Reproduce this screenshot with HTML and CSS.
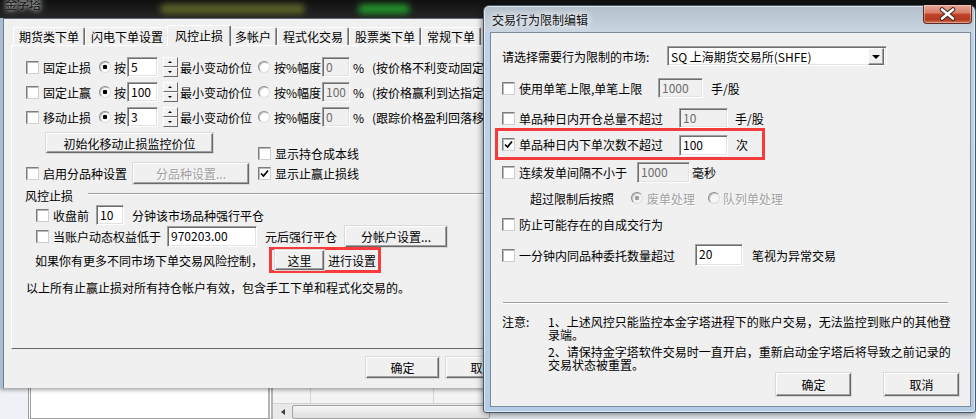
FILE: index.html
```html
<!DOCTYPE html>
<html lang="zh-CN">
<head>
  <meta charset="UTF-8">
  <title>交易行为限制编辑</title>
  <link rel="stylesheet" href="styles.css">
</head>
<body>
  <div class="desktop">
    <div class="backdrop">
      <div class="glow glow-olive"></div>
      <div class="glow glow-green"></div>
    </div>

    <div class="under">
      <div class="under-side"></div>
      <div class="under-list"></div>
      <div class="under-grid">
        <div class="hscroll">
          <span class="hscroll-arrow"></span>
          <span class="hscroll-thumb"></span>
        </div>
      </div>
    </div>

    <!-- 背后的主窗口 -->
    <div class="main-win">
      <div class="main-title"><span>金字塔</span></div>
      <div class="main-body">
        <div class="main-client">
          <div class="tabs">
            <span class="tab">期货类下单</span>
            <span class="tab">闪电下单设置</span>
            <span class="tab tab-on">风控止损</span>
            <span class="tab">多帐户</span>
            <span class="tab">程式化交易</span>
            <span class="tab">股票类下单</span>
            <span class="tab">常规下单</span>
          </div>
          <div class="panel">
            <div class="row stop-row first-row">
              <label class="chk stop-name"><span class="cb"></span>固定止损</label>
              <span class="rd on"></span>
              <span class="by">按</span>
              <span class="tb tick">5</span>
              <span class="spin"><i class="up"></i><i class="down"></i></span>
              <span class="unit-tick">最小变动价位</span>
              <span class="rd rd-pct"></span>
              <span class="pct-name">按%幅度</span>
              <span class="tb off pct">0</span>
              <span class="pct-sign">%</span>
              <span class="hint">(按价格不利变动固定</span>
            </div>
            <div class="row stop-row">
              <label class="chk stop-name"><span class="cb"></span>固定止赢</label>
              <span class="rd on"></span>
              <span class="by">按</span>
              <span class="tb tick">100</span>
              <span class="spin"><i class="up"></i><i class="down"></i></span>
              <span class="unit-tick">最小变动价位</span>
              <span class="rd rd-pct"></span>
              <span class="pct-name">按%幅度</span>
              <span class="tb off pct">100</span>
              <span class="pct-sign">%</span>
              <span class="hint">(按价格赢利到达指定</span>
            </div>
            <div class="row stop-row">
              <label class="chk stop-name"><span class="cb"></span>移动止损</label>
              <span class="rd on"></span>
              <span class="by">按</span>
              <span class="tb tick">3</span>
              <span class="spin"><i class="up"></i><i class="down"></i></span>
              <span class="unit-tick">最小变动价位</span>
              <span class="rd rd-pct"></span>
              <span class="pct-name">按%幅度</span>
              <span class="tb off pct">0</span>
              <span class="pct-sign">%</span>
              <span class="hint">(跟踪价格盈利回落移</span>
            </div>
            <div class="row init-row">
              <span class="btn init-btn">初始化移动止损监控价位</span>
              <label class="chk cost-line"><span class="cb"></span>显示持仓成本线</label>
            </div>
            <div class="row cat-row">
              <label class="chk cat-name"><span class="cb"></span>启用分品种设置</label>
              <span class="btn off cat-btn">分品种设置...</span>
              <label class="chk stop-line"><span class="cb"><svg viewBox="0 0 11 11"><polyline points="2,5.5 4.5,8 9,2.5"/></svg></span>显示止赢止损线</label>
            </div>
            <div class="group">风控止损</div>
            <div class="row close-row">
              <label class="chk close-name"><span class="cb"></span>收盘前</label>
              <span class="tb mins">10</span>
              <span class="after-input">分钟该市场品种强行平仓</span>
            </div>
            <div class="row equity-row">
              <label class="chk equity-name"><span class="cb"></span>当账户动态权益低于</label>
              <span class="tb equity">970203.00</span>
              <span class="after-input equity-unit">元后强行平仓</span>
              <span class="btn acct-btn">分帐户设置...</span>
            </div>
            <div class="row more-row">
              <span class="more-text">如果你有更多不同市场下单交易风险控制，</span>
              <span class="mark main-mark">
                <span class="btn here-btn">这里</span>
                <span class="here-text">进行设置</span>
              </span>
            </div>
            <div class="row note-row">以上所有止赢止损对所有持仓帐户有效，包含手工下单和程式化交易的。</div>
          </div>
          <div class="main-actions">
            <span class="btn act">确定</span>
            <span class="btn act">取消</span>
          </div>
        </div>
      </div>
    </div>

    <!-- 交易行为限制编辑 对话框 -->
    <div class="dialog">
      <div class="dlg-title">
        <span class="dlg-title-text">交易行为限制编辑</span>
        <span class="close-btn">
          <svg width="47" height="18" viewBox="0 0 47 18">
            <path d="M18 4.5 L29 13.5 M29 4.5 L18 13.5" stroke="#3b2520" stroke-width="4.6" stroke-linecap="round"/>
            <path d="M18 4.5 L29 13.5 M29 4.5 L18 13.5" stroke="#fff" stroke-width="2.6" stroke-linecap="round"/>
          </svg>
        </span>
      </div>
      <div class="dlg-client">
        <div class="row market-row">
          <span class="market-label">请选择需要行为限制的市场:</span>
          <span class="combo">
            <span class="combo-text">SQ 上海期货交易所(SHFE)</span>
            <span class="combo-drop"></span>
          </span>
        </div>
        <div class="row d-row1">
          <label class="chk lim-single"><span class="cb"></span>使用单笔上限,单笔上限</label>
          <span class="tb off lim-single-tb">1000</span>
          <span class="unit lim-single-unit">手/股</span>
        </div>
        <div class="row d-row2">
          <label class="chk lim-open"><span class="cb"></span>单品种日内开仓总量不超过</label>
          <span class="tb off lim-open-tb">10</span>
          <span class="unit lim-open-unit">手/股</span>
        </div>
        <div class="mark dlg-mark">
          <label class="chk lim-open"><span class="cb"><svg viewBox="0 0 11 11"><polyline points="2,5.5 4.5,8 9,2.5"/></svg></span>单品种日内下单次数不超过</label>
          <span class="tb lim-count-tb">100</span>
          <span class="unit lim-count-unit">次</span>
        </div>
        <div class="row d-row4">
          <label class="chk lim-gap"><span class="cb"></span>连续发单间隔不小于</label>
          <span class="tb off lim-gap-tb">1000</span>
          <span class="unit lim-gap-unit">毫秒</span>
        </div>
        <div class="row d-row5">
          <span class="over-label">超过限制后按照</span>
          <span class="rd on off"></span>
          <span class="dim opt-void">废单处理</span>
          <span class="rd off opt-queue-rd"></span>
          <span class="dim opt-queue">队列单处理</span>
        </div>
        <div class="row d-row6">
          <label class="chk"><span class="cb"></span>防止可能存在的自成交行为</label>
        </div>
        <div class="row d-row7">
          <label class="chk lim-burst"><span class="cb"></span>一分钟内同品种委托数量超过</label>
          <span class="tb lim-burst-tb">20</span>
          <span class="unit lim-burst-unit">笔视为异常交易</span>
        </div>
        <div class="sep"></div>
        <div class="notes">
          <div class="notes-label">注意:</div>
          <div class="notes-body">
            <p>1、上述风控只能监控本金字塔进程下的账户交易，无法监控到账户的其他登<br>录端。</p>
            <p>2、请保持金字塔软件交易时一直开启，重新启动金字塔后将导致之前记录的<br>交易状态被重置。</p>
          </div>
        </div>
        <div class="dlg-actions">
          <span class="btn dlg-btn">确定</span>
          <span class="btn dlg-btn">取消</span>
        </div>
      </div>
    </div>
  </div>
</body>
</html>
```

FILE: styles.css
```css
* {
  box-sizing: border-box;
}
body {
  margin: 0;
  font-family: "Noto Sans CJK SC", "Liberation Sans", sans-serif;
  font-size: 12px;
  color: #000;
}
.desktop {
  position: relative;
  width: 976px;
  height: 419px;
  overflow: hidden;
  background: #dfe5ec;
}

/* 顶部深色背景 */
.backdrop {
  position: absolute;
  left: 0;
  top: 0;
  width: 976px;
  height: 40px;
  background: linear-gradient(#101010, #262626 18px, #3a3a3a 40px);
}
.glow {
  position: absolute;
  top: 4px;
  height: 10px;
  border-radius: 5px;
  filter: blur(3px);
}
.glow-olive {
  left: 160px;
  width: 145px;
  background: #5c6126;
}
.glow-green {
  left: 358px;
  width: 52px;
  background: #22902b;
}

/* 主窗口下方露出的列表 */
.under {
  position: absolute;
  left: 0;
  top: 388px;
  width: 490px;
  height: 31px;
  display: flex;
  background: #f4f4f4;
}
.under-side {
  width: 28px;
  background: #eef1f5;
}
.under-list {
  width: 245px;
  background: #fff;
  border-left: 3px double #9c9c9c;
  border-right: 5px double #b5b5b5;
  border-bottom: 1px solid #a0a0a0;
}
.under-grid {
  flex: 1;
  display: flex;
  flex-direction: column;
  justify-content: flex-end;
  background: linear-gradient(90deg, transparent 37px, #d8d8d8 37px, #d8d8d8 38px, transparent 38px, transparent 160px, #d8d8d8 160px, #d8d8d8 161px, transparent 161px);
}
.hscroll {
  height: 16px;
  display: flex;
  padding: 1px 0 0 2px;
  background: #e9e9e9;
  border-top: 1px solid #d4d4d4;
}
.hscroll-arrow {
  width: 17px;
  position: relative;
}
.hscroll-arrow::after {
  content: "";
  position: absolute;
  left: 6px;
  top: 4px;
  border: 3px solid transparent;
  border-right: 4px solid #3c3c3c;
  border-left: 0;
}
.hscroll-thumb {
  flex: 1;
  border: 1px solid #a3a3a3;
  border-radius: 2px;
  background: linear-gradient(#f7f7f7, #dedede);
}

/* 主窗口 */
.main-win {
  position: absolute;
  left: 0;
  top: 0;
  width: 500px;
}
.main-title {
  height: 18px;
  padding-left: 5px;
  line-height: 12px;
  overflow: hidden;
}
.main-title span {
  display: block;
  margin-top: -2px;
  color: #111;
  text-shadow: 0 0 4px #fff, 0 0 8px rgba(255, 255, 255, 0.7);
}
.main-body {
  height: 370px;
  border-left: 3px solid #a9bdd2;
  box-shadow: 0 2px 4px rgba(0, 0, 0, 0.35);
}
.main-client {
  height: 100%;
  background: #f0f0f0;
  border-top: 1px solid #5c6875;
  border-left: 1px solid #6e7d8c;
  padding-top: 6px;
}
.tabs {
  display: flex;
  align-items: flex-end;
  height: 20px;
  margin-left: 9px;
}
.tab {
  position: relative;
  height: 18px;
  padding: 0 5px;
  line-height: 17px;
  white-space: nowrap;
  border: 1px solid #fff;
  border-right-color: #696969;
  border-bottom: 0;
  border-radius: 2px 2px 0 0;
  box-shadow: inset -1px 0 0 #a0a0a0;
}
.tab-on {
  z-index: 2;
  height: 21px;
  margin: 0 -2px -1px;
  padding: 0 7px;
  line-height: 19px;
  background: #f0f0f0;
}
.panel {
  width: 480px;
  height: 304px;
  margin-left: 7px;
  padding-left: 14px;
  border: 1px solid #fff;
  border-right-color: #696969;
  border-bottom-color: #696969;
  overflow: hidden;
  white-space: nowrap;
}
.row {
  display: flex;
  align-items: center;
  height: 20px;
  white-space: nowrap;
}

/* 控件 */
.chk {
  display: flex;
  align-items: center;
  gap: 4px;
  flex: none;
}
.cb {
  width: 13px;
  height: 13px;
  flex: none;
  background: #fff;
  border: 1px solid #7d7d7d;
  border-right-color: #cfcfcf;
  border-bottom-color: #cfcfcf;
  box-shadow: inset 1px 1px 0 #b9b9b9;
}
.cb svg {
  display: block;
  width: 11px;
  height: 11px;
  fill: none;
  stroke: #000;
  stroke-width: 1.7;
}
.rd {
  width: 12px;
  height: 12px;
  flex: none;
  border-radius: 50%;
  border: 1px solid #8a8a8a;
  border-right-color: #dcdcdc;
  border-bottom-color: #dcdcdc;
  background: #fff;
  box-shadow: inset 1px 1px 0 #c4c4c4;
}
.rd.on {
  background: radial-gradient(circle, #000 0, #000 2px, #fff 2.6px);
}
.rd.off {
  background-color: #f4f4f4;
}
.rd.on.off {
  background: radial-gradient(circle, #a0a0a0 0, #a0a0a0 2px, #f4f4f4 2.6px);
}
.tb {
  height: 20px;
  flex: none;
  padding-left: 3px;
  line-height: 18px;
  background: #fff;
  border: 1px solid #a0a0a0;
  border-right-color: #fff;
  border-bottom-color: #fff;
  box-shadow: inset 1px 1px 0 #6d6d6d, inset -1px -1px 0 #e3e3e3;
}
.tb.off {
  background: #f0f0f0;
  color: #6d6d6d;
}
.btn {
  display: flex;
  align-items: center;
  justify-content: center;
  flex: none;
  background: #f0f0f0;
  border: 1px solid #fff;
  border-right-color: #696969;
  border-bottom-color: #696969;
  box-shadow: inset -1px -1px 0 #a0a0a0, 0 0 0 1px #d9d9d9;
}
.btn.off {
  color: #a0a0a0;
  text-shadow: 1px 1px 0 #fff;
}
.spin {
  display: flex;
  flex-direction: column;
  width: 15px;
  height: 20px;
  margin-left: 5px;
  flex: none;
}
.spin i {
  position: relative;
  flex: 1;
  background: #f0f0f0;
  border: 1px solid #fff;
  border-right-color: #696969;
  border-bottom-color: #696969;
}
.spin i::after {
  content: "";
  position: absolute;
  left: 4px;
  top: 3px;
  border: 2px solid transparent;
}
.spin .up::after {
  top: 1px;
  border-bottom: 2px solid #000;
}
.spin .down::after {
  top: 3px;
  border-top: 2px solid #000;
}
.mark {
  display: flex;
  align-items: center;
  border: 3px solid #f53b3b;
}

/* 风控止损页 */
.first-row {
  margin-top: 11px;
}
.stop-row + .stop-row {
  margin-top: 5px;
}
.stop-name {
  width: 73px;
}
.by {
  width: 12px;
  margin: 0 1px 0 3px;
}
.tick {
  width: 31px;
}
.unit-tick {
  width: 72px;
  margin-left: 2px;
}
.rd-pct {
  margin-left: 6px;
}
.pct-name {
  width: 44px;
  margin-left: 4px;
}
.pct {
  width: 28px;
  margin-left: 4px;
}
.pct-sign {
  width: 8px;
  margin-left: 3px;
}
.hint {
  margin-left: 11px;
}
.init-row {
  height: 27px;
  margin-top: 6px;
  align-items: flex-start;
}
.init-btn {
  width: 167px;
  height: 20px;
  margin-left: 20px;
}
.cost-line {
  margin: 13px 0 0 45px;
  height: 14px;
}
.cat-row {
  height: 21px;
  margin-top: 3px;
}
.cat-name {
  width: 107px;
}
.cat-btn {
  width: 116px;
  height: 21px;
}
.stop-line {
  margin-left: 9px;
}
.group {
  display: flex;
  align-items: center;
  height: 16px;
  margin: 3px 0 0 -1px;
}
.group::after {
  content: "";
  flex: 1;
  margin: -3px 0 0 15px;
  border-top: 1px solid #a0a0a0;
  border-bottom: 1px solid #fff;
}
.close-row {
  margin-top: 2px;
}
.close-name {
  width: 60px;
  margin-left: 10px;
}
.mins {
  width: 28px;
}
.after-input {
  margin-left: 8px;
}
.equity-row {
  height: 22px;
}
.equity-name {
  width: 131px;
  margin-left: 10px;
}
.equity {
  width: 90px;
  height: 21px;
}
.equity-unit {
  width: 72px;
}
.acct-btn {
  width: 102px;
  height: 21px;
  margin-left: 8px;
}
.more-row {
  height: 26px;
}
.more-text {
  width: 234px;
  margin-left: 9px;
}
.main-mark {
  height: 26px;
  padding: 0 2px 0 3px;
}
.here-btn {
  width: 49px;
  height: 20px;
}
.here-text {
  margin-left: 4px;
}
.note-row {
  height: 14px;
  margin-top: 7px;
}
.main-actions {
  display: flex;
  gap: 7px;
  margin: 8px 0 0 362px;
}
.btn.act {
  width: 73px;
  height: 21px;
}

/* 对话框 */
.dialog {
  position: absolute;
  left: 483px;
  top: 5px;
  width: 493px;
  height: 408px;
  display: flex;
  flex-direction: column;
  border: 1px solid #4a5866;
  border-radius: 6px 6px 3px 3px;
  background: linear-gradient(#b3bfca, #c9d5e1 26px, #bed3e9 27px, #b4cce5);
  box-shadow: 0 0 7px rgba(0, 0, 0, 0.6), inset 0 0 0 1px rgba(255, 255, 255, 0.55);
}
.dlg-title {
  height: 26px;
  flex: none;
  display: flex;
  align-items: center;
  padding-left: 8px;
}
.dlg-title-text {
  color: #111;
  text-shadow: 0 0 6px #fff, 0 0 10px #fff;
}
.close-btn {
  align-self: flex-start;
  width: 49px;
  height: 19px;
  margin: -1px 3px 0 auto;
  border: 1px solid #5b2a22;
  border-top: 0;
  border-radius: 0 0 4px 4px;
  background: linear-gradient(#e9a696, #d77d66 45%, #c3452b 50%, #b43a22 80%, #d06f4f);
  box-shadow: inset 0 0 0 1px rgba(255, 255, 255, 0.35);
}
.close-btn svg {
  display: block;
}
.dlg-client {
  height: 375px;
  margin: 0 4px 0 6px;
  padding-left: 11px;
  background: #f0f0f0;
  border: 1px solid #7a8a9b;
  white-space: nowrap;
}
.market-row {
  margin-top: 13px;
}
.market-label {
  width: 165px;
}
.combo {
  display: flex;
  align-items: center;
  width: 220px;
  height: 20px;
  padding: 1px 1px 1px 3px;
  background: #fff;
  border: 1px solid #a0a0a0;
  border-right-color: #fff;
  border-bottom-color: #fff;
  box-shadow: inset 1px 1px 0 #6d6d6d, inset -1px -1px 0 #e3e3e3;
}
.combo-text {
  flex: 1;
  color: #000;
}
.combo-drop {
  position: relative;
  width: 16px;
  height: 17px;
  margin-right: 1px;
  background: #f0f0f0;
  border: 1px solid #fff;
  border-right-color: #696969;
  border-bottom-color: #696969;
  box-shadow: inset -1px -1px 0 #a0a0a0;
}
.combo-drop::after {
  content: "";
  position: absolute;
  left: 3px;
  top: 6px;
  border: 4px solid transparent;
  border-top: 4px solid #000;
  border-bottom: 0;
}
.d-row1 {
  margin-top: 12px;
}
.lim-single {
  width: 156px;
}
.lim-single-tb {
  width: 45px;
}
.lim-single-unit {
  margin-left: 8px;
}
.d-row2 {
  margin-top: 10px;
}
.lim-open {
  width: 177px;
}
.lim-open-tb {
  width: 49px;
}
.lim-open-unit {
  margin-left: 7px;
}
.dlg-mark {
  width: 270px;
  height: 32px;
  margin-left: -7px;
  padding-left: 4px;
}
.lim-count-tb {
  width: 49px;
  height: 21px;
  margin-top: 2px;
}
.lim-count-unit {
  margin-left: 8px;
}
.d-row4 {
  height: 21px;
  margin-top: 2px;
}
.lim-gap {
  width: 135px;
}
.lim-gap-tb {
  width: 53px;
  height: 21px;
}
.lim-gap-unit {
  margin-left: 2px;
}
.d-row5 {
  height: 18px;
  margin-top: 6px;
}
.over-label {
  width: 101px;
  margin-left: 28px;
}
.dim {
  color: #a0a0a0;
  text-shadow: 1px 1px 0 #fff;
}
.opt-void {
  width: 48px;
  margin-left: 4px;
}
.opt-queue-rd {
  margin-left: 13px;
}
.opt-queue {
  margin-left: 3px;
}
.d-row6 {
  height: 18px;
  margin-top: 8px;
}
.d-row7 {
  height: 22px;
  margin-top: 11px;
}
.lim-burst {
  width: 193px;
}
.lim-burst-tb {
  width: 48px;
  height: 22px;
}
.lim-burst-unit {
  margin-left: 9px;
}
.sep {
  width: 445px;
  margin: 36px 0 0 1px;
  border-top: 1px solid #a0a0a0;
  border-bottom: 1px solid #fff;
}
.notes {
  display: flex;
  margin-top: 11px;
  line-height: 13px;
}
.notes-label {
  width: 46px;
}
.notes-body p {
  margin: 0 0 4px;
}
.notes-body p:last-child {
  margin-bottom: 2px;
}
.dlg-actions {
  display: flex;
  justify-content: flex-end;
  gap: 33px;
  padding-right: 11px;
}
.dlg-btn {
  width: 75px;
  height: 23px;
}
```
